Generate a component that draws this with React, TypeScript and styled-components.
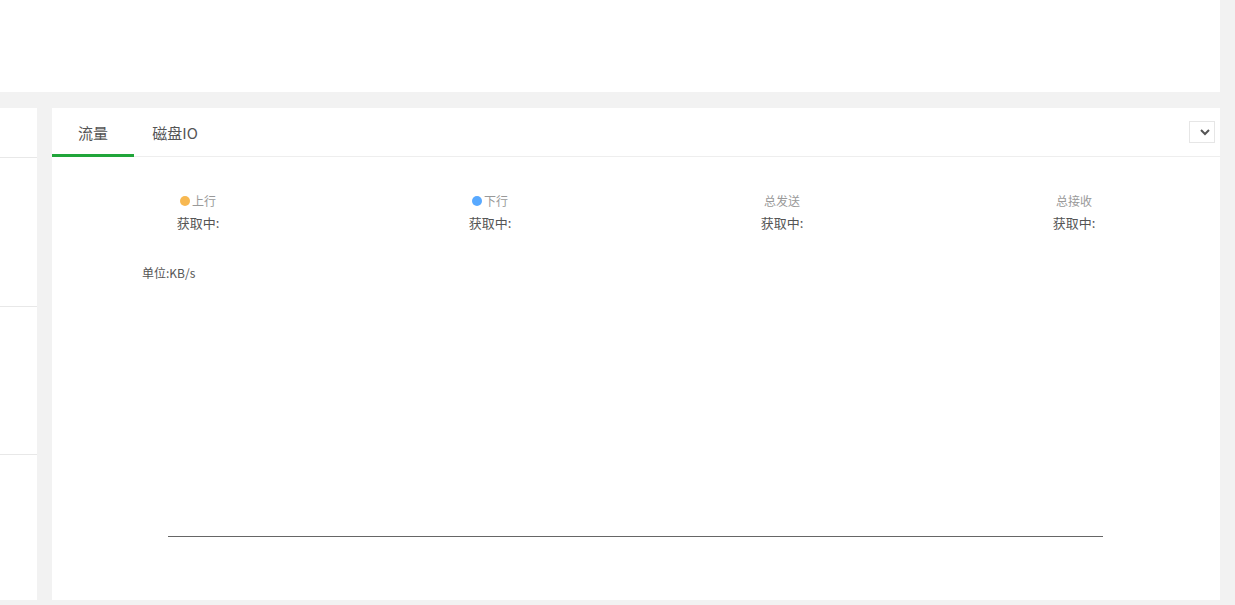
import React from "react";
import styled, { createGlobalStyle } from "styled-components";

const G = createGlobalStyle`
  html,body{margin:0;padding:0;background:#f2f2f2;font-family:"Microsoft YaHei","Noto Sans CJK SC",sans-serif;}
`;
const Page = styled.div`width:1220px;height:605px;display:flex;flex-direction:column;`;
const Top = styled.div`height:92px;background:#fff;`;
const Row = styled.div`margin-top:16px;height:492px;display:flex;gap:15px;`;
const Left = styled.div`width:37px;background:#fff;display:flex;flex-direction:column;`;
const Seg = styled.div<{h:number}>`height:${p=>p.h}px;border-bottom:1px solid #e8e8e8;`;
const Card = styled.div`flex:1;background:#fff;display:flex;flex-direction:column;position:relative;`;
const Tabs = styled.div`height:49px;border-bottom:1px solid #eee;display:flex;box-sizing:border-box;`;
const Tab = styled.div<{active?:boolean}>`width:82px;display:flex;align-items:center;justify-content:center;font-size:15px;color:#555;box-sizing:border-box;padding-top:2px;border-bottom:3px solid ${p=>p.active?"#20a53a":"transparent"};margin-bottom:-1px;`;
const Sel = styled.div`position:absolute;right:5px;top:13px;width:26px;height:22px;border:1px solid #e6e6e6;display:flex;align-items:center;justify-content:flex-end;padding-right:4px;box-sizing:border-box;`;
const Stats = styled.div`display:grid;grid-template-columns:repeat(4,1fr);padding-top:36px;`;
const Stat = styled.div`display:flex;flex-direction:column;align-items:center;gap:5px;`;
const Label = styled.div`font-size:12px;color:#999;display:flex;align-items:center;gap:2px;line-height:16px;`;
const Dot = styled.span<{c:string}>`width:10px;height:10px;border-radius:50%;background:${p=>p.c};`;
const Val = styled.div`font-size:13px;color:#555;line-height:18px;`;
const Unit = styled.div`font-size:12px;color:#555;margin:32px 0 0 90px;`;
const Axis = styled.div`margin:255px 0 0 116px;width:935px;height:1px;background:#666;`;

export default function App(){
  const s=[["#f7b851","上行"],["#58a9ff","下行"],["","总发送"],["","总接收"]];
  return <Page><G/><Top/><Row>
    <Left><Seg h={49}/><Seg h={148}/><Seg h={147}/></Left>
    <Card>
      <Tabs><Tab active>流量</Tab><Tab>磁盘IO</Tab></Tabs>
      <Sel><svg width="10" height="7" viewBox="0 0 10 7"><path d="M1 1l4 4 4-4" stroke="#555" strokeWidth="2" fill="none"/></svg></Sel>
      <Stats>{s.map(([c,t])=><Stat key={t}><Label>{c&&<Dot c={c}/>}{t}</Label><Val>获取中:</Val></Stat>)}</Stats>
      <Unit>单位:KB/s</Unit>
      <Axis/>
    </Card>
  </Row></Page>;
}
